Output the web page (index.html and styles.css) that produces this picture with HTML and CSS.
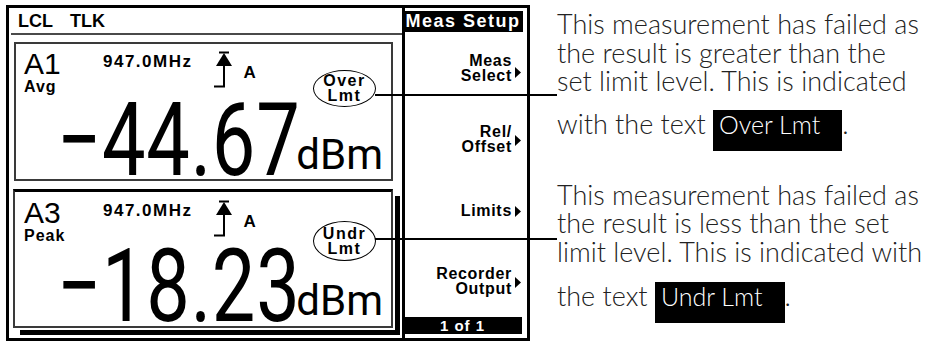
FILE: index.html
```html
<!DOCTYPE html>
<html lang="en">
<head>
    <meta charset="UTF-8">
    <meta name="viewport" content="width=device-width, initial-scale=1.0">
    <title>Limit failure indication</title>
    <link rel="stylesheet" href="styles.css">
</head>
<body>
    <div class="figure">
        <div class="meter">
            <div class="screen">
                <div class="status-bar">
                    <span>LCL</span>
                    <span>TLK</span>
                </div>

                <!-- upper window -->
                <div class="window">
                    <div class="window-top">
                        <div class="channel">
                            <div class="channel-id">A1</div>
                            <div class="channel-mode">Avg</div>
                        </div>
                        <div class="freq">947.0MHz</div>
                        <svg class="trigger" width="22" height="38" viewBox="0 0 22 38">
                            <path d="M7 1.5H17" stroke="#000" stroke-width="2" fill="none"/>
                            <polygon points="12,2 4,15 20,15" fill="#000"/>
                            <path d="M12 14V36M2 35.5H13" stroke="#000" stroke-width="2" fill="none"/>
                        </svg>
                        <div class="trigger-src">A</div>
                        <div class="limit limit-over">Over<br>Lmt<span class="leader leader-over"></span></div>
                    </div>
                    <div class="reading">
                        <span class="value">&minus;44.67</span><span class="unit">dBm</span>
                    </div>
                </div>

                <!-- lower window (selected) -->
                <div class="window window-active">
                    <div class="window-top">
                        <div class="channel">
                            <div class="channel-id">A3</div>
                            <div class="channel-mode">Peak</div>
                        </div>
                        <div class="freq">947.0MHz</div>
                        <svg class="trigger" width="22" height="38" viewBox="0 0 22 38">
                            <path d="M7 1.5H17" stroke="#000" stroke-width="2" fill="none"/>
                            <polygon points="12,2 4,15 20,15" fill="#000"/>
                            <path d="M12 14V36M2 35.5H13" stroke="#000" stroke-width="2" fill="none"/>
                        </svg>
                        <div class="trigger-src">A</div>
                        <div class="limit limit-under">Undr<br>Lmt<span class="leader leader-under"></span></div>
                    </div>
                    <div class="reading">
                        <span class="value">&minus;18.23</span><span class="unit">dBm</span>
                    </div>
                </div>
            </div>

            <div class="softkeys">
                <div class="menu-title">Meas Setup</div>
                <div class="key">
                    <span class="key-label">Meas<br>Select</span>
                    <svg class="key-arrow key-arrow-low" width="6" height="11" viewBox="0 0 6 11"><polygon points="0,0 6,5.5 0,11" fill="#000"/></svg>
                </div>
                <div class="key">
                    <span class="key-label">Rel/<br>Offset</span>
                    <svg class="key-arrow" width="6" height="11" viewBox="0 0 6 11"><polygon points="0,0 6,5.5 0,11" fill="#000"/></svg>
                </div>
                <div class="key">
                    <span class="key-label">Limits</span>
                    <svg class="key-arrow" width="6" height="11" viewBox="0 0 6 11"><polygon points="0,0 6,5.5 0,11" fill="#000"/></svg>
                </div>
                <div class="key">
                    <span class="key-label">Recorder<br>Output</span>
                    <svg class="key-arrow" width="6" height="11" viewBox="0 0 6 11"><polygon points="0,0 6,5.5 0,11" fill="#000"/></svg>
                </div>
                <div class="page-no">1 of 1</div>
            </div>
        </div>

        <div class="notes">
            <p class="note">This measurement has failed as<br>the result is greater than the<br>set limit level. This is indicated<br>with the text <span class="tag">Over Lmt</span>.</p>
            <p class="note note-second">This measurement has failed as<br>the result is less than the set<br>limit level. This is indicated with<br>the text <span class="tag">Undr Lmt</span>.</p>
        </div>
    </div>
</body>
</html>
```

FILE: styles.css
```css
/* page */
body {
    margin: 0;
    background: #fff;
    color: #000;
    font-family: "Liberation Sans", Arial, sans-serif;
}

.figure {
    display: flex;
    padding: 5px 0 0 6px;
}

/* meter screen */
.meter {
    flex-shrink: 0;
    display: flex;
    width: 524px;
    height: 336px;
    box-sizing: border-box;
    border: 3px solid #000;
}

.screen {
    width: 393px;
    display: flex;
    flex-direction: column;
}

.status-bar {
    display: flex;
    gap: 17px;
    height: 27px;
    box-sizing: border-box;
    margin-left: 2px;
    padding: 2px 0 0 7px;
    border-bottom: 2px solid #4a4a4a;
    font-weight: bold;
    font-size: 18px;
    line-height: 22px;
}

.window {
    display: flex;
    flex-direction: column;
    width: 379px;
    height: 139px;
    box-sizing: border-box;
    margin: 7px 0 0 5px;
    padding: 5px 8px 3px 8px;
    border: 2px solid #3a3a3a;
}

.window-active {
    width: 380px;
    margin: 8px 0 0 4px;
    padding: 6px 8px 4px 9px;
    border-top: 3px solid #000;
    box-shadow: 2px 2px 0 #fff, 7px 7px 0 #000;
}

.window-top {
    display: flex;
    align-items: flex-start;
    height: 50px;
    font-weight: bold;
}

.channel {
    width: 79px;
}

.channel-id {
    font-weight: normal;
    font-size: 30px;
    line-height: 30px;
}

.channel-mode {
    font-size: 16px;
    line-height: 16px;
    letter-spacing: 1px;
}

.freq {
    margin-top: 4px;
    font-size: 17px;
    line-height: 17px;
    letter-spacing: 1.5px;
}

.trigger {
    margin: 2px 0 0 20px;
}

.trigger-src {
    margin: 15px 0 0 9px;
    font-size: 17px;
    line-height: 17px;
}

/* limit status with its marking oval */
.limit {
    position: relative;
    width: 63px;
    height: 37px;
    box-sizing: border-box;
    margin: 21px 7px 0 auto;
    padding-top: 2px;
    border: 1px solid #000;
    border-radius: 50%;
    text-align: center;
    font-size: 16px;
    line-height: 15px;
    letter-spacing: 1.5px;
}

.limit-under {
    height: 40px;
    margin-top: 23px;
    padding-top: 4px;
}

.leader {
    position: absolute;
    left: 100%;
    width: 182px;
    height: 2px;
    background: #000;
}

.leader-over {
    top: 23px;
}

.leader-under {
    top: 16px;
}

/* big reading, narrowed like the meter's display font */
.reading {
    margin-top: auto;
    display: flex;
    justify-content: flex-end;
    align-items: baseline;
    font-family: Roboto, "Liberation Sans", sans-serif;
    font-size: 102px;
    line-height: 72px;
}

.value {
    margin-right: -4px;
    letter-spacing: 1px;
    transform: scaleX(0.76);
    transform-origin: right;
}

.unit {
    align-self: flex-end;
    margin-bottom: 6px;
    font-size: 42px;
    line-height: 30px;
}

/* softkey menu */
.softkeys {
    flex: 1;
    display: flex;
    flex-direction: column;
    border-left: 3px solid #000;
    font-weight: bold;
}

.menu-title {
    height: 21px;
    margin: 3px 4px 0 -2px;
    background: #000;
    color: #fff;
    text-align: center;
    white-space: nowrap;
    font-size: 18px;
    line-height: 21px;
    letter-spacing: 1.5px;
}

.key {
    flex: 1;
    display: flex;
    align-items: center;
    justify-content: flex-end;
    padding-right: 6px;
}

.key-label {
    text-align: right;
    font-size: 16px;
    line-height: 15px;
    letter-spacing: 0.7px;
}

.key-arrow {
    margin-left: 3px;
    margin-top: 3px;
}

.key-arrow-low {
    margin-top: 9px;
}

.page-no {
    height: 17px;
    margin: 0 5px 4px -2px;
    background: #000;
    color: #fff;
    text-align: center;
    font-size: 15px;
    line-height: 17px;
    letter-spacing: 1px;
}

/* explanation text */
.notes {
    margin: 5px 0 0 27px;
    font-family: Lato, Roboto, sans-serif;
    font-weight: 300;
    font-size: 27px;
    line-height: 28.5px;
    color: #222;
}

.note {
    margin: 0;
    white-space: nowrap;
}

.note-second {
    margin-top: 30px;
}

.tag {
    display: inline-block;
    margin-top: 14px;
    padding: 2px 22px 15px 6px;
    background: #000;
    color: #fff;
    font-size: 25px;
    line-height: 24px;
}

.note-second .tag {
    margin-top: 16px;
}
```
